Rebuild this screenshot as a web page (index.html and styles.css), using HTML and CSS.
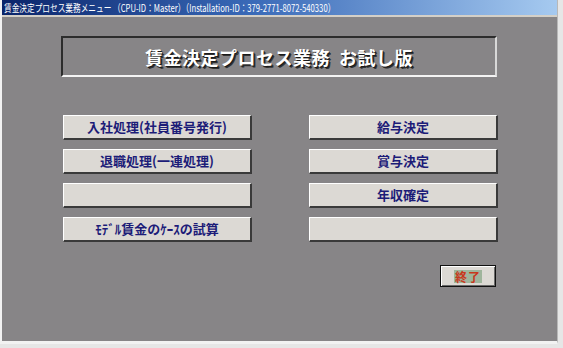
FILE: index.html
```html
<!DOCTYPE html>
<html lang="ja">
<head>
    <meta charset="UTF-8">
    <title>賃金決定プロセス業務メニュー</title>
    <link rel="stylesheet" href="styles.css">
</head>
<body>
    <div class="window">
        <div class="titlebar"><span class="caption">賃金決定プロセス業務メニュー （CPU-ID：Master）（Installation-ID：379-2771-8072-540330）</span></div>
        <div class="client">
            <div class="banner">賃金決定プロセス業務&nbsp;&nbsp;お試し版</div>

            <div class="menu">
                <div class="menu-col">
                    <button class="btn">入社処理(社員番号発行)</button>
                    <button class="btn">退職処理(一連処理)</button>
                    <button class="btn"></button>
                    <button class="btn">ﾓﾃﾞﾙ賃金のｹｰｽの試算</button>
                </div>
                <div class="menu-col">
                    <button class="btn">給与決定</button>
                    <button class="btn">賞与決定</button>
                    <button class="btn">年収確定</button>
                    <button class="btn"></button>
                </div>
            </div>

            <div class="footer">
                <button class="btn-exit"><span>終了</span></button>
            </div>
        </div>
    </div>
</body>
</html>
```

FILE: styles.css
```css
body {
    margin: 0;
    padding: 0;
    background-color: #e6e6e6;
    font-family: "Noto Sans CJK JP", "Noto Sans", sans-serif;
}
.window {
    width: 555px;
    height: 341px;
    background-color: #878587;
    border-left: 2px solid #f2f2f2;
    border-bottom: 3px solid #f2f2f2;
    border-right: 1px solid #b8b8b8;
    display: flex;
    flex-direction: column;
}
.titlebar {
    height: 15px;
    line-height: 15px;
    padding-left: 2px;
    font-size: 10.5px;
    color: #ffffff;
    white-space: nowrap;
    overflow: hidden;
    background: linear-gradient(to right, #0a246a 0%, #3a6ab8 45%, #a6caf0 100%);
    border-bottom: 2px solid #d4d0c8;
}
.caption {
    display: inline-block;
    transform: scaleX(0.73);
    transform-origin: left center;
}
.client {
    flex: 1;
    padding: 19px 0 0 59px;
    display: flex;
    flex-direction: column;
}
.banner {
    width: 432px;
    height: 37px;
    border-top: 2px solid #2c2c2c;
    border-left: 2px solid #2c2c2c;
    border-bottom: 2px solid #f4f4f4;
    border-right: 2px solid #d8d8d8;
    display: flex;
    align-items: center;
    justify-content: center;
    color: #ffffff;
    font-size: 18px;
    font-weight: bold;
    text-shadow: 1px 1px 0 #1a1a1a, 2px 2px 0 #333;
    letter-spacing: 0.5px;
}
.menu {
    display: flex;
    gap: 57px;
    margin-top: 38px;
    margin-left: 2px;
}
.menu-col {
    display: flex;
    flex-direction: column;
    gap: 9px;
}
.btn {
    width: 189px;
    height: 25px;
    padding: 0;
    background-color: #dcd9d4;
    border-top: 1px solid #ffffff;
    border-left: 1px solid #ffffff;
    border-bottom: 2px solid #3a3a3a;
    border-right: 2px solid #3a3a3a;
    color: #1c1c78;
    font-family: "Noto Sans CJK JP", sans-serif;
    font-size: 13px;
    font-weight: bold;
    line-height: 20px;
}
.footer {
    display: flex;
    margin-top: 23px;
    padding-left: 379px;
}
.btn-exit {
    width: 56px;
    height: 22px;
    padding: 0;
    background-color: #dcd9d4;
    border: 1px solid #111111;
    box-shadow: inset 1px 1px 0 #ffffff, inset -1px -1px 0 #6a6a6a;
    display: flex;
    align-items: center;
    justify-content: center;
}
.btn-exit span {
    background-color: #9fb59c;
    color: #c8381c;
    font-family: "Noto Sans CJK JP", sans-serif;
    font-size: 12px;
    font-weight: bold;
    line-height: 13px;
    padding: 0 1px;
    letter-spacing: 1px;
}
```
